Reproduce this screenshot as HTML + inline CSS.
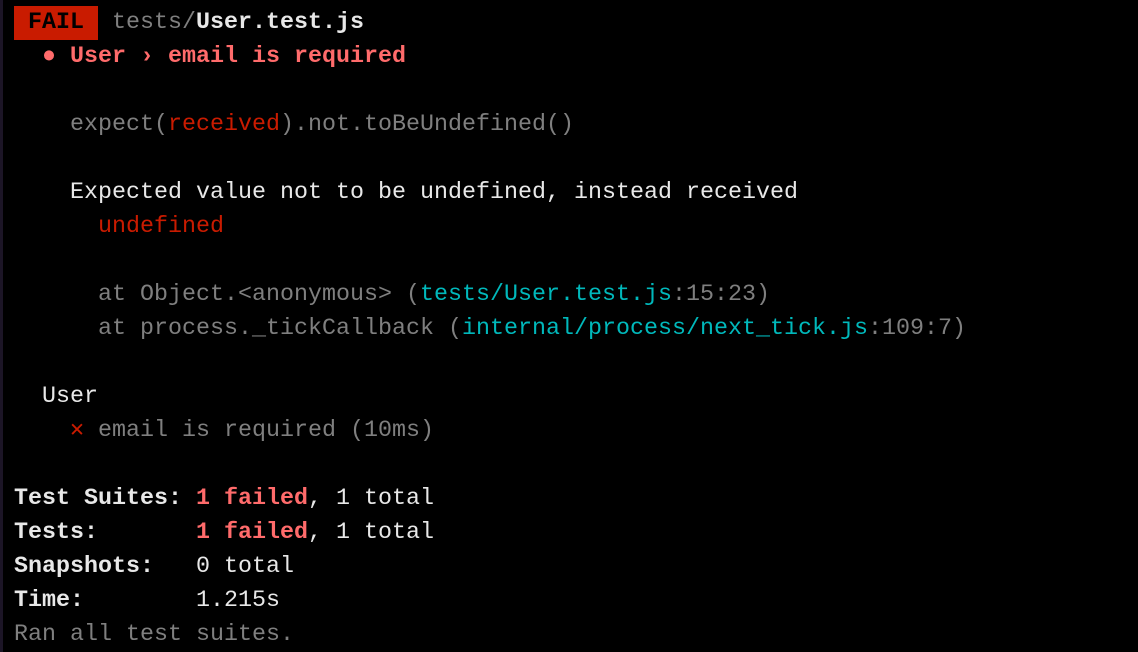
<!DOCTYPE html><html><head><style>
html,body{margin:0;background:#000;}
body{width:1138px;height:652px;overflow:hidden;position:relative;}
.edge{position:absolute;left:0;top:0;width:3px;height:652px;background:#1c1526;}
pre{margin:0;position:absolute;left:14px;top:6px;font-family:"Liberation Mono",monospace;font-size:23.33px;line-height:34px;color:#7f7f7f;white-space:pre;}
.w{color:#e8e8e8}.b{font-weight:bold}
.r{color:#ff6b6b}.dr{color:#c91b00}.c{color:#00b8bb}
.badge{background:#c91b00;color:#000;padding:4px 0 4px 0;}
</style></head><body><div class="edge"></div><pre><span class="badge b"> FAIL </span> tests/<span class="w b">User.test.js</span>
  <span class="r b">● User › email is required</span>

    expect(<span class="dr">received</span>).not.toBeUndefined()

    <span class="w">Expected value not to be undefined, instead received</span>
      <span class="dr">undefined</span>

      at Object.&lt;anonymous&gt; (<span class="c">tests/User.test.js</span>:15:23)
      at process._tickCallback (<span class="c">internal/process/next_tick.js</span>:109:7)

  <span class="w">User</span>
    <span class="dr">✕</span> email is required (10ms)

<span class="w b">Test Suites: </span><span class="r b">1 failed</span><span class="w">, 1 total</span>
<span class="w b">Tests:       </span><span class="r b">1 failed</span><span class="w">, 1 total</span>
<span class="w b">Snapshots:   </span><span class="w">0 total</span>
<span class="w b">Time:        </span><span class="w">1.215s</span>
Ran all test suites.</pre></body></html>
